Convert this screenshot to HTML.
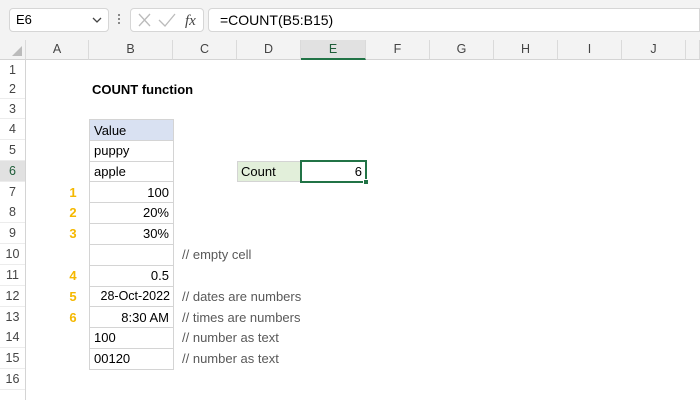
<!DOCTYPE html><html style="overflow:hidden;width:700px;height:400px"><head><style>
body{margin:0;width:700px;height:400px;overflow:hidden;background:#fff;font-family:"Liberation Sans",sans-serif;position:relative}
div{position:absolute;box-sizing:border-box}
.top{left:0;top:0;width:700px;height:40px;background:#f3f3f3}
.ch{top:40px;height:19.5px;background:#f3f3f3;border-right:1px solid #dadada;border-bottom:1px solid #d4d4d4;font-size:12.5px;color:#444;text-align:center;line-height:19px}
.rh{left:0;width:25px;font-size:12.5px;color:#444;text-align:center;background:#fff;border-bottom:1px solid #ececec}
.t{font-size:13px;color:#000;line-height:20px;white-space:nowrap}
.b{left:89px;width:85px;border:1px solid #d4d4d4;border-top:none;font-size:13px;line-height:21px;padding:0 4px;white-space:nowrap}
.r{text-align:right}
.n{left:60px;width:26px;text-align:center;color:#f5b800;font-weight:bold;font-size:13px;line-height:21px}
.c{left:182px;color:#595959;font-size:13px;line-height:21px;white-space:nowrap}
</style></head><body>
<div class="top"></div>
<div style="left:9px;top:8px;width:100px;height:24px;background:#fff;border:1px solid #d6d6d6;border-radius:4px;font-size:13px;line-height:22px;padding-left:6px">E6</div>
<svg style="position:absolute;left:92px;top:16px" width="10" height="8"><path d="M1 2 L5 6 L9 2" stroke="#444" fill="none" stroke-width="1.3"/></svg>
<div style="left:118px;top:14px;width:2px;height:2px;background:#888;box-shadow:0 4px #888,0 8px #888"></div>
<div style="left:130px;top:8px;width:74px;height:24px;background:#fff;border:1px solid #d6d6d6;border-radius:4px"></div>
<svg style="position:absolute;left:137px;top:12px" width="64" height="16"><path d="M2 2 L13 14 M13 2 L2 14" stroke="#bbb" stroke-width="1.3"/><path d="M22 8 L28 14 L38 2" stroke="#bbb" fill="none" stroke-width="1.3"/><text x="48" y="13" font-family="Liberation Serif" font-style="italic" font-size="15" fill="#444">fx</text></svg>
<div style="left:208px;top:8px;width:492px;height:24px;background:#fff;border:1px solid #d6d6d6;border-radius:4px 0 0 4px;font-size:14px;line-height:22px;padding-left:11px">=COUNT(B5:B15)</div>
<div class="ch" style="left:0;width:26px"><svg width="26" height="19"><path d="M22 16 L22 6 L12 16Z" fill="#bbb"/></svg></div>
<div class="ch" style="left:26px;width:63px">A</div>
<div class="ch" style="left:89px;width:84px">B</div>
<div class="ch" style="left:173px;width:64px">C</div>
<div class="ch" style="left:237px;width:64px">D</div>
<div class="ch" style="left:301px;width:65px;background:#e1e1e1;border-bottom:2px solid #217346;color:#1e5c38">E</div>
<div class="ch" style="left:366px;width:64px">F</div>
<div class="ch" style="left:430px;width:64px">G</div>
<div class="ch" style="left:494px;width:64px">H</div>
<div class="ch" style="left:558px;width:64px">I</div>
<div class="ch" style="left:622px;width:64px">J</div>
<div class="ch" style="left:686px;width:14px"></div>
<div class="rh" style="top:59.5px;height:20px;line-height:20px">1</div>
<div class="rh" style="top:79.3px;height:20px;line-height:20px">2</div>
<div class="rh" style="top:99.2px;height:20px;line-height:20px">3</div>
<div class="rh" style="top:119px;height:21px;line-height:21px">4</div>
<div class="rh" style="top:139.8px;height:21px;line-height:21px">5</div>
<div class="rh" style="top:160.7px;height:21px;line-height:21px;background:#e1e1e1;color:#1e5c38">6</div>
<div class="rh" style="top:181.5px;height:21px;line-height:21px">7</div>
<div class="rh" style="top:202.3px;height:21px;line-height:21px">8</div>
<div class="rh" style="top:223.2px;height:21px;line-height:21px">9</div>
<div class="rh" style="top:244px;height:21px;line-height:21px">10</div>
<div class="rh" style="top:264.8px;height:21px;line-height:21px">11</div>
<div class="rh" style="top:285.7px;height:21px;line-height:21px">12</div>
<div class="rh" style="top:306.5px;height:21px;line-height:21px">13</div>
<div class="rh" style="top:327.3px;height:21px;line-height:21px">14</div>
<div class="rh" style="top:348.2px;height:21px;line-height:21px">15</div>
<div class="rh" style="top:369px;height:21px;line-height:21px">16</div>
<div style="left:25px;top:59.5px;width:1px;height:340px;background:#d4d4d4"></div>

<div class="t" style="left:92px;top:80px;font-weight:bold">COUNT function</div>
<div class="b" style="top:119px;height:21.8px;border-top:1px solid #d4d4d4;background:#d9e1f2">Value</div>
<div class="b" style="top:139.8px;height:21.8px">puppy</div>
<div class="b" style="top:160.7px;height:21.8px">apple</div>
<div class="b r" style="top:181.5px;height:21.8px">100</div>
<div class="b r" style="top:202.3px;height:21.8px">20%</div>
<div class="b r" style="top:223.2px;height:21.8px">30%</div>
<div class="b" style="top:244px;height:21.8px"></div>
<div class="b r" style="top:264.8px;height:21.8px">0.5</div>
<div class="b r" style="top:285.7px;height:21.8px;font-size:12.5px;padding:0 3px">28-Oct-2022</div>
<div class="b r" style="top:306.5px;height:21.8px">8:30 AM</div>
<div class="b" style="top:327.3px;height:21.8px">100</div>
<div class="b" style="top:348.2px;height:21.8px">00120</div>
<div class="n" style="top:181.5px">1</div>
<div class="n" style="top:202.3px">2</div>
<div class="n" style="top:223.2px">3</div>
<div class="n" style="top:264.8px">4</div>
<div class="n" style="top:285.7px">5</div>
<div class="n" style="top:306.5px">6</div>
<div class="c" style="top:244px">// empty cell</div>
<div class="c" style="top:285.7px">// dates are numbers</div>
<div class="c" style="top:306.5px">// times are numbers</div>
<div class="c" style="top:327.3px">// number as text</div>
<div class="c" style="top:348.2px">// number as text</div>
<div style="left:237px;top:160.7px;width:65px;height:21px;background:#e2efda;border:1px solid #d4d4d4;font-size:13px;line-height:20px;padding-left:3px">Count</div>
<div style="left:300px;top:160px;width:67px;height:22.5px;border:2px solid #217346;font-size:13px;line-height:19px;text-align:right;padding-right:3px">6</div>
<div style="left:363px;top:179px;width:6px;height:6px;background:#217346;border:1px solid #fff"></div>
</body></html>
